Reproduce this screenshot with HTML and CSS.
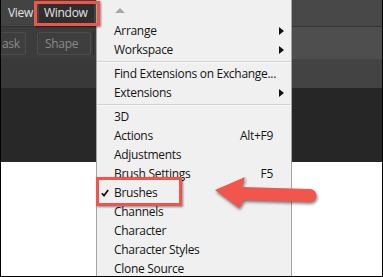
FILE: index.html
```html
<!DOCTYPE html>
<html>
<head>
<meta charset="utf-8">
<link rel="stylesheet" href="styles.css">
</head>
<body>
<div class="frame">
  <div class="app">
    <div class="row menubar">
      <div class="left">
        <span class="mb-item">View</span>
        <span class="mb-item active">Window</span>
      </div>
      <div class="right"></div>
    </div>
    <div class="row toolbar">
      <div class="left">
        <span class="tbtn cut">ask</span>
        <span class="tbtn">Shape</span>
        <span class="tdiv"></span>
      </div>
      <div class="right"></div>
    </div>
    <div class="row optbar">
      <div class="left"></div>
      <div class="right"></div>
    </div>
    <div class="row dark">
      <div class="left"></div>
      <div class="right"></div>
    </div>
    <div class="row canvas"></div>
  </div>

  <div class="menu">
    <div class="mi up"><span class="uparrow"></span></div>
    <div class="mi"><span class="chk"></span><span class="lbl">Arrange</span><span class="sc"></span><span class="sub"></span></div>
    <div class="mi"><span class="chk"></span><span class="lbl">Workspace</span><span class="sc"></span><span class="sub"></span></div>
    <div class="sep"></div>
    <div class="mi"><span class="chk"></span><span class="lbl">Find Extensions on Exchange...</span><span class="sc"></span><span class="nosub"></span></div>
    <div class="mi"><span class="chk"></span><span class="lbl">Extensions</span><span class="sc"></span><span class="sub"></span></div>
    <div class="sep"></div>
    <div class="mi"><span class="chk"></span><span class="lbl">3D</span><span class="sc"></span><span class="nosub"></span></div>
    <div class="mi"><span class="chk"></span><span class="lbl">Actions</span><span class="sc">Alt+F9</span><span class="nosub"></span></div>
    <div class="mi"><span class="chk"></span><span class="lbl">Adjustments</span><span class="sc"></span><span class="nosub"></span></div>
    <div class="mi"><span class="chk"></span><span class="lbl">Brush Settings</span><span class="sc">F5</span><span class="nosub"></span></div>
    <div class="mi"><span class="chk"><svg width="8" height="8" viewBox="0 0 8 8"><path d="M0.8 4.2 L3 6.6 L7.2 1" fill="none" stroke="#111" stroke-width="1.7"/></svg></span><span class="lbl">Brushes</span><span class="sc"></span><span class="nosub"></span></div>
    <div class="mi"><span class="chk"></span><span class="lbl">Channels</span><span class="sc"></span><span class="nosub"></span></div>
    <div class="mi"><span class="chk"></span><span class="lbl">Character</span><span class="sc"></span><span class="nosub"></span></div>
    <div class="mi"><span class="chk"></span><span class="lbl">Character Styles</span><span class="sc"></span><span class="nosub"></span></div>
    <div class="mi"><span class="chk"></span><span class="lbl">Clone Source</span><span class="sc"></span><span class="nosub"></span></div>
  </div>

  <div class="hl hl-window"></div>
  <div class="hl hl-brushes"></div>
  <svg class="arrow" width="383" height="277" viewBox="0 0 383 277">
    <path d="M214 190 L244 177 L241 187 L309 189 A6.5 6.5 0 0 1 309 202 L243 200 L238 208 Z" fill="#f2554c"/>
  </svg>
</div>
</body>
</html>
```
FILE: styles.css
```css
html, body { margin: 0; padding: 0; }
body { width: 383px; height: 277px; overflow: hidden; background: #000; }

.frame {
  position: relative;
  width: 383px;
  height: 277px;
  box-sizing: border-box;
  border-left: 1px solid #000;
  border-right: 1px solid #000;
  border-bottom: 1px solid #000;
  overflow: hidden;
  font-family: "Open Sans", "Noto Sans", sans-serif;
  letter-spacing: -0.3px;
}

.app { display: flex; flex-direction: column; height: 100%; background: #fff; }
.row { display: flex; }
.row .left { width: 95px; flex: none; display: flex; align-items: center; }
.row .right { flex: 1; }

.menubar { height: 26px; border-bottom: 1px solid #333; }
.menubar .left { background: #434343; }
.menubar .right { background: #484848; }
.mb-item { color: #e2e2e2; font-size: 12px; line-height: 22px; }
.mb-item:first-child { margin-left: 7px; }
.mb-item.active { margin-left: 6px; background: #2e2e2e; padding: 0 6px 0 5px; }

.toolbar { height: 32px; }
.toolbar .left { background: #3c3c3c; }
.toolbar .right { background: #4e4e4e; }
.tbtn {
  height: 23px; box-sizing: border-box;
  border: 1px solid #4c4c4c; border-radius: 2px;
  color: #8a8a8a; font-size: 12px; line-height: 21px;
  padding: 0 8px; background: #3e3e3e;
  flex: none;
}
.tbtn.cut { margin-left: -7px; padding-left: 7px; width: 32px; }
.tbtn + .tbtn { margin-left: 11px; padding: 0 12px 0 7px; }
.tdiv { width: 1px; height: 24px; background: #2a2a2a; margin-left: 2px; flex: none; }

.optbar { height: 29px; }
.optbar .left { background: #393939; }
.optbar .right { background: #434343; }

.dark { height: 74px; }
.dark .left { background: #282828; }
.dark .right { background: #262626; }

.canvas { flex: 1; background: #fff; }

.menu {
  position: absolute;
  left: 95px;
  top: 0;
  width: 196px;
  height: 280px;
  box-sizing: border-box;
  background: #f0f0f0;
  border-left: 1px solid #a3a3a3;
  border-right: 1px solid #a3a3a3;
  color: #141414;
  font-size: 12px;
}
.mi {
  display: grid;
  grid-template-columns: 17px 1fr auto 18px;
  align-items: center;
  height: 19px;
  line-height: 19px;
}
.mi.up { height: 21px; display: flex; padding-left: 18px; align-items: flex-start; }
.uparrow {
  width: 0; height: 0; margin-top: 8px;
  border-left: 5.5px solid transparent;
  border-right: 5.5px solid transparent;
  border-bottom: 5px solid #a8a8a8;
}
.chk { display: flex; align-items: center; padding-left: 4px; }
.lbl { white-space: nowrap; }
.sc { text-align: right; }
.sub {
  width: 0; height: 0; margin-left: 6px;
  border-left: 5px solid #111;
  border-top: 4.5px solid transparent;
  border-bottom: 4.5px solid transparent;
}
.sep {
  height: 5px;
  display: flex; align-items: center;
}
.sep::before {
  content: ""; display: block; width: 100%;
  height: 1px; background: #d2d2d2; border-bottom: 1px solid #fafafa;
}

.hl {
  position: absolute;
  box-sizing: border-box;
  border: 3px solid #f0554c;
  box-shadow: 1px 1px 2px rgba(0,0,0,0.45);
}
.hl-window { left: 33px; top: 1px; width: 66px; height: 25px; }
.hl-brushes { left: 95px; top: 177px; width: 86px; height: 29px; }

.arrow {
  position: absolute; left: 0; top: 0;
  filter: drop-shadow(1px 2px 1.5px rgba(0,0,0,0.5));
  pointer-events: none;
}
```
